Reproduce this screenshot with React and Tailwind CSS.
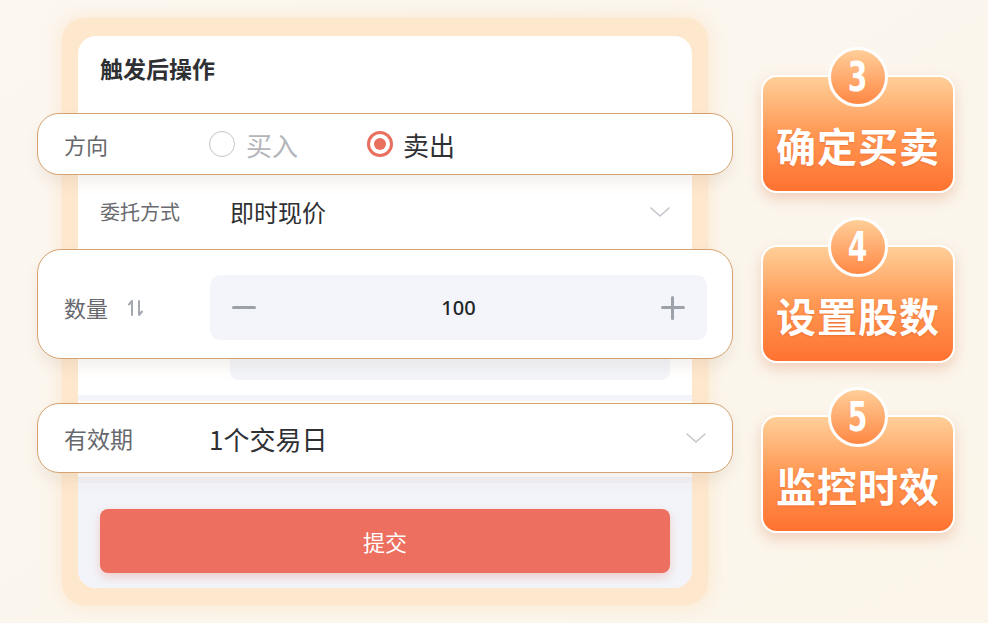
import React from "react";

const CJK = { fontFamily: '"Noto Sans CJK SC", "Noto Sans", sans-serif' };

function Chevron() {
  return (
    <svg width="22" height="12" viewBox="0 0 22 12">
      <path d="M2 2 L11 10 L20 2" fill="none" stroke="#c4c6cc" strokeWidth="1.6" strokeLinecap="round" strokeLinejoin="round" />
    </svg>
  );
}

function SortIcon() {
  return (
    <svg width="18" height="20" viewBox="0 0 18 20">
      <path d="M5 3 L5 17 M5 3 L2 6.5" fill="none" stroke="#a4a8b0" strokeWidth="2" strokeLinecap="round" strokeLinejoin="round" />
      <path d="M12 3 L12 17 L15 13.5" fill="none" stroke="#a4a8b0" strokeWidth="2" strokeLinecap="round" strokeLinejoin="round" />
    </svg>
  );
}

function Badge({ num, text }) {
  return (
    <div className="relative w-[194px] h-[118px]">
      <div className="w-full h-full rounded-[16px] border-2 border-white bg-gradient-to-b from-[#ffcf98] via-[#ff9752] to-[#ff7230] shadow-[0_6px_14px_rgba(220,140,100,0.35)] flex items-center justify-center pt-[22px]">
        <span className="text-white text-[40px] font-bold leading-none tracking-[1px] [text-shadow:0_1px_2px_rgba(200,80,30,0.35)]" style={CJK}>
          {text}
        </span>
      </div>
      <div className="absolute left-1/2 -translate-x-1/2 top-[-28px] w-[60px] h-[60px] rounded-full border-[3px] border-white bg-gradient-to-b from-[#ffce98] to-[#ff8742] flex items-center justify-center">
        <span className="text-white text-[40px] font-bold leading-none scale-x-[0.78] inline-block" style={{ fontFamily: '"DejaVu Sans Condensed", "DejaVu Sans", sans-serif' }}>
          {num}
        </span>
      </div>
    </div>
  );
}

function Radio({ checked }) {
  if (checked) {
    return (
      <span className="w-[26px] h-[26px] rounded-full border-[3px] border-[#e9705f] flex items-center justify-center">
        <span className="w-[12px] h-[12px] rounded-full bg-[#e9705f]" />
      </span>
    );
  }
  return <span className="w-[26px] h-[26px] rounded-full border-[1.5px] border-[#c2c5cc]" />;
}

export default function App() {
  return (
    <div className="relative w-[988px] h-[623px] overflow-hidden bg-gradient-to-br from-[#fcf7f1] to-[#fbf5ea] flex items-start" style={CJK}>
      {/* Left frame */}
      <div className="ml-[62px] mt-[18px] w-[646px] h-[587px] rounded-[22px] bg-[#fde7cd] shadow-[0_0_18px_rgba(253,222,185,0.7)] px-[16px] pt-[18px] pb-[17px]">
        <div className="w-full h-full rounded-[18px] bg-white overflow-hidden flex flex-col">
          <div className="h-[77px] pl-[22px] pt-[17px] shrink-0">
            <span className="text-[23px] leading-[30px] font-bold text-[#2f3033]">触发后操作</span>
          </div>
          <div className="h-[62px] shrink-0" />
          <div className="h-[74px] shrink-0 flex items-center pl-[22px] pr-[21px]">
            <span className="w-[130px] text-[20px] text-[#6a6b70]">委托方式</span>
            <span className="flex-1 text-[24px] text-[#2f3033]">即时现价</span>
            <Chevron />
          </div>
          <div className="h-[85px] shrink-0" />
          <div className="h-[46px] shrink-0 flex items-start pl-[22px] pr-[22px]">
            <span className="w-[130px] text-[18px] leading-[22px] text-[#6a6b70]">价格</span>
            <div className="flex-1 h-full rounded-[8px] bg-[#f3f5fa]" />
          </div>
          <div className="h-[15px] shrink-0" />
          <div className="flex-1 bg-[#f2f4f9] flex flex-col">
            <div className="h-[6px] shrink-0" />
            <div className="h-[76px] shrink-0 bg-white" />
            <div className="h-[7px] shrink-0" />
            <div className="h-px shrink-0 bg-[#f9fafc]" />
            <div className="px-[22px] pt-[24px]">
              <div className="h-[64px] rounded-[8px] bg-[#ec6f5f] shadow-[0_4px_10px_rgba(236,111,95,0.3)] flex items-center justify-center text-white text-[22px]">
                提交
              </div>
            </div>
          </div>
        </div>
      </div>

      {/* Right badges */}
      <div className="ml-[53px] mt-[75px] flex flex-col gap-[52px]">
        <Badge num="3" text="确定买卖" />
        <Badge num="4" text="设置股数" />
        <Badge num="5" text="监控时效" />
      </div>

      {/* Overlay pill: 方向 */}
      <div className="absolute left-[37px] top-[113px] w-[696px] h-[62px] rounded-[22px] border border-[#d6a370] bg-white shadow-[0_8px_14px_rgba(170,150,130,0.14)] flex items-center pl-[26px]">
        <span className="w-[145px] text-[22px] text-[#67686d]">方向</span>
        <Radio checked={false} />
        <span className="ml-[11px] w-[121px] text-[26px] text-[#b3b5ba]">买入</span>
        <Radio checked />
        <span className="ml-[10px] text-[26px] text-[#2f3033]">卖出</span>
      </div>

      {/* Overlay pill: 数量 */}
      <div className="absolute left-[37px] top-[249px] w-[696px] h-[110px] rounded-[24px] border border-[#d6a370] bg-white shadow-[0_8px_14px_rgba(170,150,130,0.14)] flex items-center pl-[26px] pr-[25px] pt-[7px]">
        <span className="w-[63px] text-[22px] text-[#67686d]">数量</span>
        <span className="w-[83px] flex items-center">
          <SortIcon />
        </span>
        <div className="flex-1 h-[65px] rounded-[10px] bg-[#f3f5fa] flex items-center justify-between px-[22px]">
          <span className="w-[24px] h-[3px] rounded-full bg-[#9ca1aa]" />
          <span className="text-[20px] font-medium text-[#222326]" style={{ fontFamily: '"Noto Sans", sans-serif' }}>100</span>
          <span className="relative w-[24px] h-[24px]">
            <span className="absolute left-0 top-[10.5px] w-[24px] h-[3px] rounded-full bg-[#9ca1aa]" />
            <span className="absolute top-0 left-[10.5px] w-[3px] h-[24px] rounded-full bg-[#9ca1aa]" />
          </span>
        </div>
      </div>

      {/* Overlay pill: 有效期 */}
      <div className="absolute left-[37px] top-[403px] w-[696px] h-[70px] rounded-[22px] border border-[#d6a370] bg-white shadow-[0_8px_14px_rgba(170,150,130,0.14)] flex items-center pl-[26px] pr-[25px]">
        <span className="w-[145px] text-[23px] text-[#67686d]">有效期</span>
        <span className="flex-1 text-[26px] text-[#2f3033]">1个交易日</span>
        <Chevron />
      </div>
    </div>
  );
}
